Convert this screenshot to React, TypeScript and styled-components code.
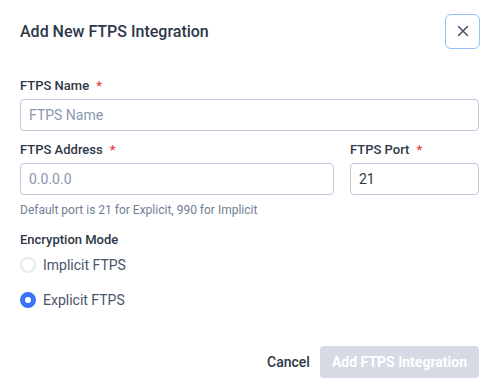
import React, { useState } from 'react';
import styled, { createGlobalStyle } from 'styled-components';

const GlobalStyle = createGlobalStyle`
    html, body {
        margin: 0;
        padding: 0;
        background: #ffffff;
    }
    body {
        font-family: Roboto, "Liberation Sans", sans-serif;
        color: #2d3748;
    }
`;

const Dialog = styled.div`
    width: 497px;
    height: 390px;
    box-sizing: border-box;
    padding: 14px 17px 0 20px;
    display: flex;
    flex-direction: column;
    background: #ffffff;
`;

const Header = styled.div`
    display: flex;
    align-items: center;
    justify-content: space-between;
    height: 34px;
`;

const Title = styled.h2`
    margin: 0;
    font-size: 16px;
    font-weight: 500;
    color: #2d3748;
`;

const CloseButton = styled.button`
    width: 35px;
    height: 35px;
    display: flex;
    align-items: center;
    justify-content: center;
    border: 1px solid #93c0f8;
    border-radius: 6px;
    background: #ffffff;
    color: #4a5568;
    padding: 0;
    cursor: pointer;
`;

const Form = styled.div`
    display: flex;
    flex-direction: column;
    margin-top: 30px;
    padding-right: 1px;
`;

const Row = styled.div`
    display: grid;
    grid-template-columns: 1fr 129px;
    gap: 16px;
    margin-top: 11px;
`;

const Field = styled.div`
    display: flex;
    flex-direction: column;
`;

const Label = styled.label`
    font-size: 13px;
    font-weight: 500;
    color: #2d3748;
    line-height: 16px;
    margin-bottom: 5px;
`;

const Star = styled.span`
    color: #e53e3e;
    margin-left: 7px;
`;

const Input = styled.input`
    box-sizing: border-box;
    width: 100%;
    height: 32px;
    border: 1px solid #bfc8dc;
    border-radius: 4px;
    padding: 0 8px;
    font-family: Roboto, "Liberation Sans", sans-serif;
    font-size: 14px;
    color: #2d3748;
    outline: none;
    &::placeholder {
        color: #8a97ae;
    }
`;

const Helper = styled.div`
    font-size: 12px;
    color: #718096;
    margin-top: 8px;
    line-height: 14px;
`;

const SectionLabel = styled.div`
    font-size: 13px;
    font-weight: 500;
    color: #2d3748;
    margin-top: 15px;
    line-height: 16px;
`;

const RadioGroup = styled.div`
    display: flex;
    flex-direction: column;
    gap: 19px;
    margin-top: 9px;
`;

const RadioRow = styled.label`
    display: flex;
    align-items: center;
    gap: 7px;
    font-size: 14px;
    color: #4a5568;
    cursor: pointer;
    height: 16px;
`;

const RadioDot = styled.span<{ $checked: boolean }>`
    box-sizing: border-box;
    width: 16px;
    height: 16px;
    border-radius: 50%;
    border: ${(p) => (p.$checked ? '5px solid #3b72f6' : '2px solid #e5e9f0')};
    background: #ffffff;
    flex-shrink: 0;
`;

const Footer = styled.div`
    display: flex;
    justify-content: flex-end;
    align-items: center;
    gap: 10px;
    margin-top: auto;
    margin-bottom: 12px;
    padding-right: 1px;
`;

const CancelButton = styled.button`
    background: none;
    border: none;
    padding: 0;
    font-family: Roboto, "Liberation Sans", sans-serif;
    font-size: 14px;
    font-weight: 500;
    color: #2d3748;
    cursor: pointer;
`;

const SubmitButton = styled.button`
    height: 32px;
    padding: 0 12px;
    border: none;
    border-radius: 4px;
    background: #d5dae4;
    color: #ffffff;
    font-family: Roboto, "Liberation Sans", sans-serif;
    font-size: 14px;
    font-weight: 700;
    cursor: not-allowed;
`;

export default function App() {
    const [mode, setMode] = useState('explicit');

    return (
        <>
            <GlobalStyle />
            <Dialog>
                <Header>
                    <Title>Add New FTPS Integration</Title>
                    <CloseButton aria-label="Close">
                        <svg width="12" height="12" viewBox="0 0 12 12" fill="none" stroke="currentColor" strokeWidth="1.6" strokeLinecap="round">
                            <path d="M1.5 1.5l9 9M10.5 1.5l-9 9" />
                        </svg>
                    </CloseButton>
                </Header>
                <Form>
                    <Field>
                        <Label>
                            FTPS Name<Star>*</Star>
                        </Label>
                        <Input placeholder="FTPS Name" />
                    </Field>
                    <Row>
                        <Field>
                            <Label>
                                FTPS Address<Star>*</Star>
                            </Label>
                            <Input placeholder="0.0.0.0" />
                        </Field>
                        <Field>
                            <Label>
                                FTPS Port<Star>*</Star>
                            </Label>
                            <Input defaultValue="21" />
                        </Field>
                    </Row>
                    <Helper>Default port is 21 for Explicit, 990 for Implicit</Helper>
                    <SectionLabel>Encryption Mode</SectionLabel>
                    <RadioGroup>
                        <RadioRow onClick={() => setMode('implicit')}>
                            <RadioDot $checked={mode === 'implicit'} />
                            Implicit FTPS
                        </RadioRow>
                        <RadioRow onClick={() => setMode('explicit')}>
                            <RadioDot $checked={mode === 'explicit'} />
                            Explicit FTPS
                        </RadioRow>
                    </RadioGroup>
                </Form>
                <Footer>
                    <CancelButton>Cancel</CancelButton>
                    <SubmitButton disabled>Add FTPS Integration</SubmitButton>
                </Footer>
            </Dialog>
        </>
    );
}
